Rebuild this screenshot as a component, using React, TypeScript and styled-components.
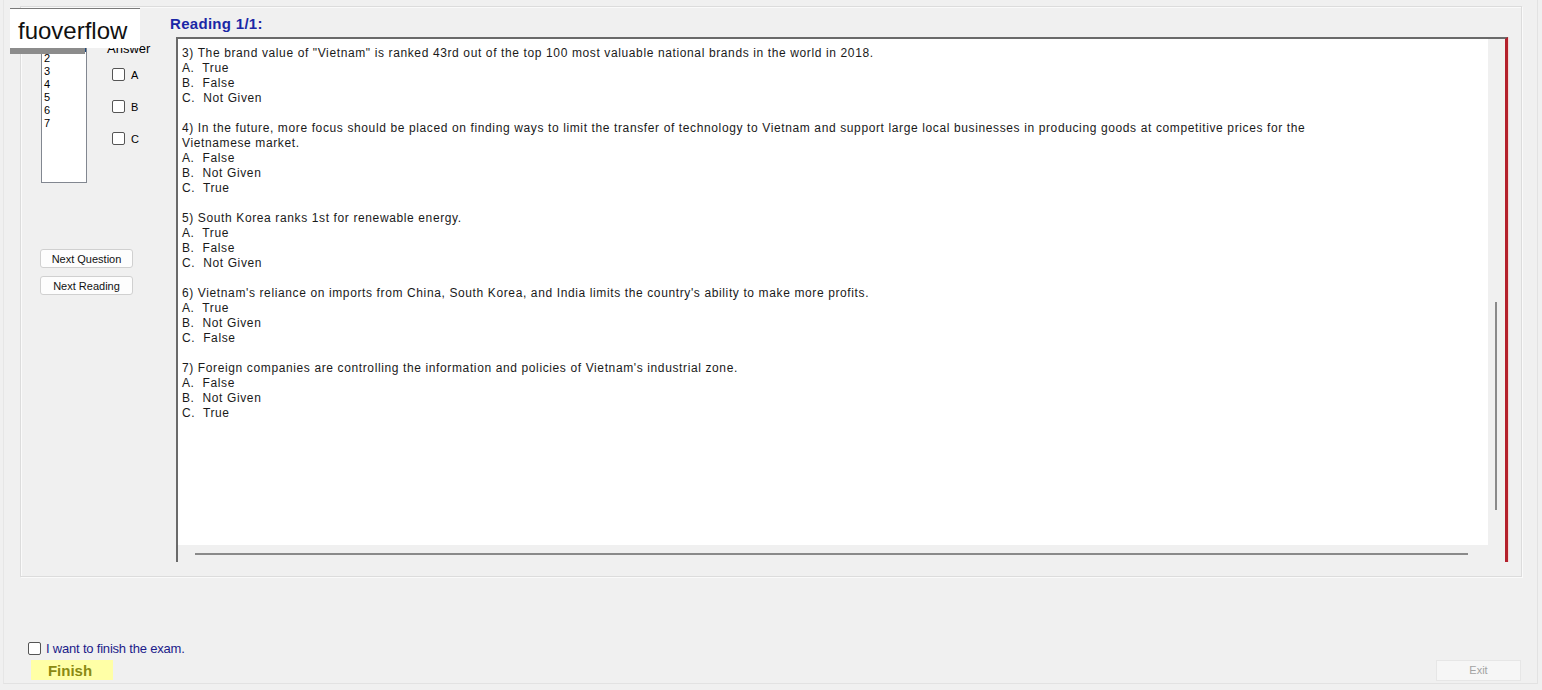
import React from "react";
import styled, { createGlobalStyle } from "styled-components";

const GlobalStyle = createGlobalStyle`
  html, body { margin: 0; padding: 0; background: #f0f0f0; }
  body { font-family: "Liberation Sans", Arial, sans-serif; color: #000; }
  * { box-sizing: border-box; }
`;

const Page = styled.div`
  position: relative;
  width: 1542px;
  height: 690px;
  overflow: hidden;
  background: #f0f0f0;
`;

const Frame = styled.div`
  margin: 0 4px 0 3px;
  height: 684px;
  border-left: 1px solid #e6e6e6;
  border-right: 1px solid #e2e2e2;
  border-bottom: 1px solid #e2e2e2;
  display: flex;
  flex-direction: column;
`;

const GroupBox = styled.div`
  margin: 6px 0 0 16px;
  width: 1502px;
  height: 571px;
  border: 1px solid #dcdcdc;
  box-shadow: inset 1px 1px 0 #fafafa, 1px 1px 0 #fafafa;
  display: flex;
`;

const Sidebar = styled.div`
  width: 149px;
  padding: 31px 0 0 20px;
  display: flex;
  flex-direction: column;
`;

const TopRow = styled.div`
  display: flex;
  gap: 20px;
`;

const ListBox = styled.div`
  width: 46px;
  height: 145px;
  background: #fff;
  border: 1px solid #828790;
  font-size: 11px;
`;

const ListItem = styled.div<{ $selected?: boolean }>`
  height: 13px;
  line-height: 13px;
  padding-left: 2px;
  background: ${(p) => (p.$selected ? "#1f4a7e" : "transparent")};
  color: ${(p) => (p.$selected ? "#fff" : "#000")};
`;

const AnswerCol = styled.div`
  display: flex;
  flex-direction: column;
  padding-top: 3px;
`;

const AnswerLabel = styled.div`
  font-size: 13px;
  line-height: 15px;
  color: #000;
  margin-bottom: 12px;
`;

const CheckRow = styled.label`
  display: flex;
  align-items: center;
  gap: 6px;
  font-size: 11px;
  height: 13px;
  margin-left: 5px;
  margin-bottom: 19px;
`;

const Box = styled.span`
  display: inline-block;
  width: 13px;
  height: 13px;
  border: 1px solid #555;
  border-radius: 2px;
  background: #fff;
`;

const ButtonCol = styled.div`
  margin-top: 66px;
  margin-left: -1px;
  display: flex;
  flex-direction: column;
  gap: 8px;
`;

const SmallButton = styled.div`
  width: 93px;
  height: 19px;
  border: 1px solid #d0d0d0;
  border-radius: 3px;
  background: #fdfdfd;
  font-size: 11px;
  line-height: 18px;
  text-align: center;
  color: #111;
`;

const Content = styled.div`
  flex: 1;
  display: flex;
  flex-direction: column;
`;

const Title = styled.div`
  font-weight: bold;
  font-size: 15px;
  line-height: 16px;
  letter-spacing: 0.3px;
  color: #1a27a6;
  padding: 9px 0 0 0;
  height: 30px;
`;

const TextBox = styled.div`
  margin-left: 6px;
  width: 1332px;
  height: 525px;
  border-left: 2px solid #6a6a6a;
  border-top: 2px solid #6a6a6a;
  border-right: 3px solid #b3202c;
  box-shadow: 1px 0 0 #f7d9d2, 2px 0 0 #e6ecf6;
  display: grid;
  grid-template-columns: 1fr 17px;
  grid-template-rows: 1fr 17px;
  background: #f0f0f0;
`;

const TextArea = styled.div`
  background: #fff;
  padding: 7px 0 0 4px;
  font-size: 12px;
  line-height: 15px;
  letter-spacing: 0.62px;
  color: #1a1a1a;
  overflow: hidden;
`;

const Line = styled.div`
  white-space: pre;
  height: 15px;
`;

const VScroll = styled.div`
  display: flex;
  justify-content: center;
  align-items: flex-start;
`;

const VThumb = styled.div`
  width: 2px;
  height: 208px;
  margin-top: 263px;
  margin-left: -2px;
  background: #8a8a8a;
`;

const HScroll = styled.div`
  display: flex;
  align-items: center;
  padding-left: 17px;
`;

const HThumb = styled.div`
  height: 2px;
  width: 1273px;
  background: #8a8a8a;
`;

const Corner = styled.div`
  background: #f0f0f0;
`;

const Bottom = styled.div`
  display: flex;
  flex-direction: column;
  padding: 64px 0 0 24px;
`;

const FinishCheck = styled.label`
  display: flex;
  align-items: center;
  gap: 5px;
  font-size: 13px;
  color: #1b1b8a;
  height: 15px;
  letter-spacing: -0.2px;
`;

const FinishRow = styled.div`
  display: flex;
  justify-content: space-between;
  margin-top: 4px;
  padding-right: 16px;
`;

const FinishButton = styled.div`
  margin-left: 3px;
  width: 82px;
  height: 20px;
  background: #ffffa6;
  color: #8a8a12;
  font-weight: bold;
  font-size: 15px;
  line-height: 21px;
  text-align: center;
  padding-right: 4px;
`;

const ExitButton = styled.div`
  width: 85px;
  height: 21px;
  background: #f6f6f6;
  border: 1px solid #e6e6e6;
  color: #a3a3a3;
  font-size: 11px;
  line-height: 19px;
  text-align: center;
`;

const Watermark = styled.div`
  position: absolute;
  left: 10px;
  top: 8px;
  width: 130px;
  height: 40px;
  background: #fff;
  border-top: 1px solid #7a7a7a;
  font-family: "Liberation Sans", Arial, sans-serif;
  font-size: 24px;
  line-height: 36px;
  padding: 4px 0 0 8px;
  color: #111;

  &::after {
    content: "";
    position: absolute;
    left: 0;
    top: 39px;
    width: 75px;
    height: 6px;
    background: #8c8c8c;
  }
`;

const lines: string[] = [
  '3) The brand value of "Vietnam" is ranked 43rd out of the top 100 most valuable national brands in the world in 2018.',
  "A.  True",
  "B.  False",
  "C.  Not Given",
  "",
  "4) In the future, more focus should be placed on finding ways to limit the transfer of technology to Vietnam and support large local businesses in producing goods at competitive prices for the",
  "Vietnamese market.",
  "A.  False",
  "B.  Not Given",
  "C.  True",
  "",
  "5) South Korea ranks 1st for renewable energy.",
  "A.  True",
  "B.  False",
  "C.  Not Given",
  "",
  "6) Vietnam's reliance on imports from China, South Korea, and India limits the country's ability to make more profits.",
  "A.  True",
  "B.  Not Given",
  "C.  False",
  "",
  "7) Foreign companies are controlling the information and policies of Vietnam's industrial zone.",
  "A.  False",
  "B.  Not Given",
  "C.  True",
];

export default function App() {
  return (
    <Page>
      <GlobalStyle />
      <Frame>
        <GroupBox>
          <Sidebar>
            <TopRow>
              <ListBox>
                {["1", "2", "3", "4", "5", "6", "7"].map((n, i) => (
                  <ListItem key={n} $selected={i === 0}>
                    {n}
                  </ListItem>
                ))}
              </ListBox>
              <AnswerCol>
                <AnswerLabel>Answer</AnswerLabel>
                {["A", "B", "C"].map((l) => (
                  <CheckRow key={l}>
                    <Box />
                    {l}
                  </CheckRow>
                ))}
              </AnswerCol>
            </TopRow>
            <ButtonCol>
              <SmallButton>Next Question</SmallButton>
              <SmallButton>Next Reading</SmallButton>
            </ButtonCol>
          </Sidebar>
          <Content>
            <Title>Reading 1/1:</Title>
            <TextBox>
              <TextArea>
                {lines.map((t, i) => (
                  <Line key={i}>{t}</Line>
                ))}
              </TextArea>
              <VScroll>
                <VThumb />
              </VScroll>
              <HScroll>
                <HThumb />
              </HScroll>
              <Corner />
            </TextBox>
          </Content>
        </GroupBox>
        <Bottom>
          <FinishCheck>
            <Box />
            I want to finish the exam.
          </FinishCheck>
          <FinishRow>
            <FinishButton>Finish</FinishButton>
            <ExitButton>Exit</ExitButton>
          </FinishRow>
        </Bottom>
      </Frame>
      <Watermark>fuoverflow</Watermark>
    </Page>
  );
}
